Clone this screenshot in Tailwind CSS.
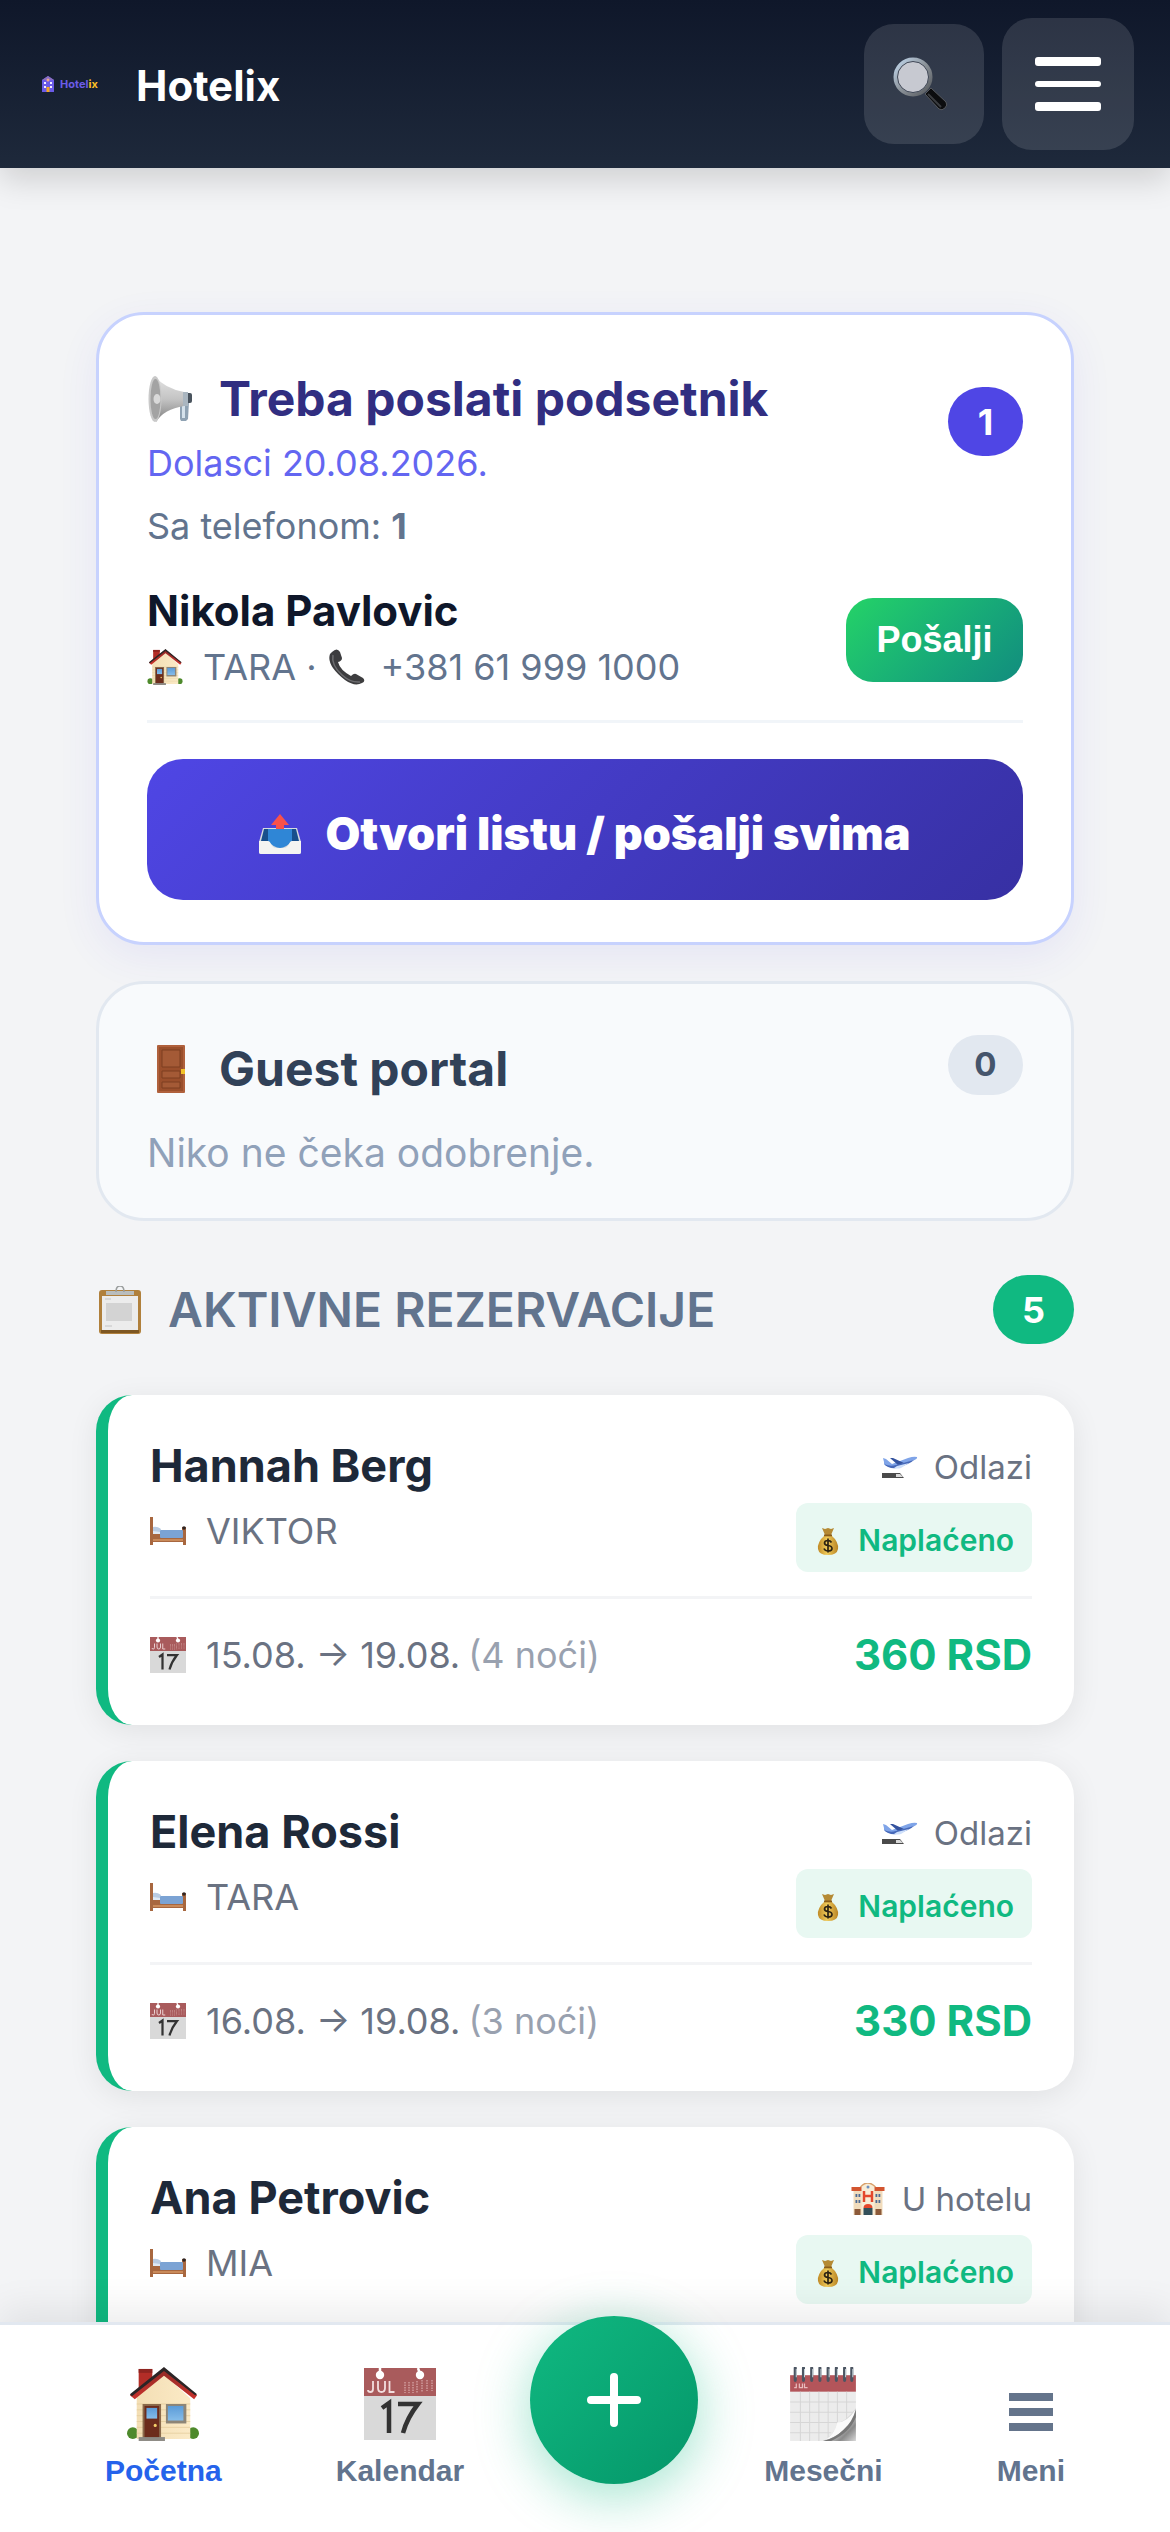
<!DOCTYPE html>
<html lang="sr">
<head>
<meta charset="utf-8">
<meta name="viewport" content="width=device-width, initial-scale=1">
<title>Hotelix</title>
<script src="https://cdn.jsdelivr.net/npm/@tailwindcss/browser@4"></script>
</head>
<body class="flex h-screen flex-col overflow-hidden bg-gray-100 font-['Inter',sans-serif] text-[36px] text-slate-500">

<!-- Shared icon shapes -->
<svg width="0" height="0" class="absolute" aria-hidden="true">
  <defs>
    <linearGradient id="g-roof" x1="0" y1="0" x2="0" y2="1"><stop offset="0" stop-color="#8f2a26"/><stop offset="1" stop-color="#c8322c"/></linearGradient>
    <linearGradient id="g-win" x1="0" y1="0" x2="0" y2="1"><stop offset="0" stop-color="#5b9bd8"/><stop offset="1" stop-color="#86bdea"/></linearGradient>
    <linearGradient id="g-wall" x1="0" y1="0" x2="1" y2="0"><stop offset="0" stop-color="#f3deb4"/><stop offset="1" stop-color="#fbeac6"/></linearGradient>
    <linearGradient id="g-horn" x1="0" y1="0" x2="0" y2="1"><stop offset="0" stop-color="#e4e4e4"/><stop offset=".5" stop-color="#c4c4c4"/><stop offset="1" stop-color="#7f7f7f"/></linearGradient>
    <linearGradient id="g-rim" x1="0" y1="0" x2="1" y2="1"><stop offset="0" stop-color="#c2d8ee"/><stop offset=".5" stop-color="#8b9299"/><stop offset="1" stop-color="#55585c"/></linearGradient>
    <linearGradient id="g-bag" x1="0" y1="0" x2="1" y2="0"><stop offset="0" stop-color="#c08a26"/><stop offset=".45" stop-color="#f0cb5a"/><stop offset="1" stop-color="#b98425"/></linearGradient>
    <linearGradient id="g-curl" x1="0" y1="0" x2="1" y2="1"><stop offset="0" stop-color="#ffffff"/><stop offset=".45" stop-color="#ededed"/><stop offset=".75" stop-color="#8a8a8a"/><stop offset="1" stop-color="#d8d8d8"/></linearGradient>
  </defs>
  <symbol id="house" viewBox="0 0 74 76">
    <circle cx="6" cy="68" r="6" fill="#4e8a2c"/><circle cx="68" cy="68" r="6" fill="#4e8a2c"/>
    <rect x="12" y="2" width="14" height="26" fill="#b32d27"/><rect x="12" y="2" width="14" height="4" fill="#8f2420"/>
    <path d="M10 30 38 8l27 24v42H10z" fill="url(#g-wall)"/>
    <path d="M10 38h55M10 44h55M10 50h55M10 56h55M10 62h55M10 68h55" stroke="#e3cc9c" stroke-width=".8"/>
    <path d="M3 29 38 1l34 28-3 4L38 9 8 33z" fill="url(#g-roof)"/>
    <path d="M3 28 38 0l34 28-2 1L38 4 5 30z" fill="#2b2526"/>
    <rect x="16" y="38" width="19" height="35" fill="#8a6a4c"/><rect x="18" y="40" width="15" height="33" fill="#6c2c1c"/>
    <rect x="20" y="42" width="11" height="11" fill="url(#g-win)"/><circle cx="29" cy="60" r="1.6" fill="#f4cf6a"/>
    <rect x="40" y="38" width="21" height="20" fill="#8d8577"/><rect x="42" y="40" width="16" height="15" fill="url(#g-win)"/>
    <rect x="12" y="72" width="27" height="4" fill="#8d8a84"/>
  </symbol>
  <symbol id="calendar" viewBox="0 0 72 72">
    <rect width="72" height="72" fill="#d9d9d9"/><rect width="72" height="28" fill="#a95b5c"/>
    <circle cx="16" cy="7" r="4.200" fill="#fff"/><circle cx="56" cy="7" r="4.200" fill="#fff"/>
    <path d="M16 0v6M54 0l2 6" stroke="#fff" stroke-width="2.500"/>
    <path d="M9 13v8q0 3-2.500 3T4 22M14 13v7q0 4 3.500 4t3.500-4v-7M25.500 13v11h5" fill="none" stroke="#f2dede" stroke-width="1.800"/>
    <path d="M41 14v11M45 14v11M49 14v11M53 13v12M58 12v12M63 12v11M68 12v11" stroke="#cf9b9b" stroke-width="1.500" stroke-dasharray="1.500 1"/>
    <path d="m18 40 7-5v30M34 36h20Q43 50 39 65" fill="none" stroke="#333" stroke-width="4.500"/>
  </symbol>
  <symbol id="spiral" viewBox="0 0 64 72">
    <rect y="8" width="64" height="64" fill="#ececec"/><rect x="0" y="8" width="64" height="16" fill="#b3555a"/>
    <path d="M10 24v48M19 24v48M28 24v48M37 24v48M46 24v48M55 24v30M0 34h64M0 44h62M0 54h54M0 64h40" stroke="#d6d6d6" stroke-width="1"/>
    <path d="M6 16v4h-2M9 16v4h3v-4M14 16v4h3" fill="none" stroke="#e8bcbc" stroke-width="1.200"/>
    <path d="M32 72q10-4 14-18 8 0 18-14v32z" fill="url(#g-curl)"/><path d="M34 71q9-5 12-17 9 0 18-13-3 12-12 20-8 8-18 10z" fill="#fafafa"/>
    <path d="M52 61q9-8 12-20v8Q58 64 40 72h-8q12-3 20-11z" fill="#777"/>
    <path d="M5 1v12M13 1v12M21 1v12M29 1v12M37 1v12M45 1v12M53 1v12M60 1v12" stroke="#4c5562" stroke-width="3" stroke-linecap="round"/>
    <path d="M6 2v8M14 2v8M22 2v8M30 2v8M38 2v8M46 2v8M54 2v8M61 2v8" stroke="#c6d2d8" stroke-width="1"/>
  </symbol>
  <symbol id="bed" viewBox="0 0 36 28">
    <path d="M0 0h3v14h29V10h4v18h-3v-3H3v3H0z" fill="#a8673f"/>
    <path d="M3 11h7v6H3z" fill="#dfe9f4"/><path d="M3 10q4-1 8 2l-1 3-7-1z" fill="#b9cbe2"/><rect x="10" y="13" width="23" height="8" rx="1" fill="#7ba3d4"/>
    <path d="M3 22h30v2H3z" fill="#c98a5a"/><circle cx="34" cy="11" r="1.800" fill="#2f2523"/>
  </symbol>
  <symbol id="plane" viewBox="0 0 36 24">
    <path d="M2 7 1 3l3 1 6 5 16-6q6-2 9-1 1 2-5 4L14 12q-8 1-12-3z" fill="#7fa4e8"/>
    <path d="m8 3 3 0 11 5-6 2z" fill="#33529e"/><path d="M2 9q6 3 12 1l18-5q-4 4-17 8-9 1-13-4z" fill="#4668b8"/><path d="m15 11 12-3-8 5q-4 1-7 0z" fill="#cfe0fa"/>
    <path d="M0 18h18l4 5H0z" fill="#4a4a4a"/><path d="M14 19h4l3 3h-7z" fill="#d9d9d9"/>
  </symbol>
  <symbol id="hotel" viewBox="0 0 33 32">
    <path d="M2 7h29v25H2z" fill="#f1dcbc"/><path d="M10 3q6-5 13 0v29H10z" fill="#f8ecd6"/>
    <path d="M0 4h10v4H0zM23 4h10v4H23z" fill="#d3552f"/><path d="M9 4q7-8 15 0" fill="none" stroke="#d8a06a" stroke-width="1.500"/><circle cx="16.500" cy="4" r="1.500" fill="#6b8fc0"/>
    <path d="M12.500 8v11M20.500 8v11M12.500 13h8" stroke="#e4472c" stroke-width="2.500"/>
    <path d="M4 11h1.800v3H4zM7 11h1.800v3H7zM4 17h1.800v3H4zM7 17h1.800v3H7zM24 11h1.800v3H24zM27 11h1.800v3H27zM24 17h1.800v3H24zM27 17h1.800v3H27z" fill="#4d6a94"/>
    <path d="M12 25q0-4 4.500-4t4.500 4z" fill="#e4472c"/><rect x="12" y="25" width="9" height="7" fill="#33505a"/><path d="M3 26h6v6H3zM24 26h6v6h-6z" fill="#8c5a3a"/>
  </symbol>
  <symbol id="moneybag" viewBox="0 0 22 28">
    <path d="m5 1 3 1 3-1 3 1 3-1-3 7H8z" fill="#b58a34"/><path d="M8 8h6q8 7 7 14-1 6-10 6T1 22Q0 15 8 8z" fill="url(#g-bag)"/>
    <path d="M7 7.500h8v1.800H7z" fill="#8a5e1a"/>
    <path d="M14.500 15.500q-1-2-3.500-2-3.500 0-3.500 2.500 0 2 3.500 2.500 4 .5 4 3 0 2.500-4 2.500-3 0-4-2.500M11 11.500v14" fill="none" stroke="#2e2412" stroke-width="1.700"/>
  </symbol>
  <symbol id="megaphone" viewBox="0 0 46 46">
    <path d="M32 22h9v4l-1 17-2 2h-5l-1-2z" fill="#8fa2b3"/><path d="M34 22h3v20h-3z" fill="#d5e2ec"/><rect x="37" y="17" width="7" height="10" rx="2" fill="#4a545e"/>
    <path d="M7 0q9 12 29 16 3 6 0 14-20 3-28 16z" fill="url(#g-horn)"/><path d="M35 16h5v14h-5z" fill="#aab6c0"/>
    <ellipse cx="7" cy="23" rx="6.500" ry="23" fill="#c9c9c9"/><ellipse cx="7.500" cy="23" rx="5" ry="20" fill="#a3a3a3"/><ellipse cx="9" cy="23" rx="3.500" ry="5" fill="#d9d9d9"/>
  </symbol>
  <symbol id="phone" viewBox="0 0 36 36">
    <path d="M3 3Q8-2 11 3l2 6q0 3-4 4 2 8 13 14 3-3 5-2l7 4q3 3-1 5-7 4-17-3Q-3 16 1 5z" fill="#3d3d3f"/>
    <path d="M4 6Q2 16 13 26q9 8 18 7" fill="none" stroke="#6d6d70" stroke-width="1.500"/>
  </symbol>
  <symbol id="outbox" viewBox="0 0 42 40">
    <path d="M4 14h34l4 14v10q0 2-2 2H2q-2 0-2-2V28z" fill="#d7dbe0"/><path d="M5 15h32l3 12H2z" fill="#174f8d"/><path d="M9 15h24v12q-6 7-12 7T9 27z" fill="#2f86d6"/>
    <path d="M0 27h9q2 0 3 3 2 4 5 4h8q3 0 5-4 1-3 3-3h9v11q0 2-2 2H2q-2 0-2-2z" fill="#f4f4f2"/>
    <path d="m21 0 9 11h-5v4h-8v-4h-5z" fill="#f8514b"/>
  </symbol>
  <symbol id="door" viewBox="0 0 28 48">
    <rect width="28" height="48" rx="1" fill="#b0603c"/><rect x="2" y="2" width="24" height="44" fill="#9a4f2c"/>
    <path d="M5 5h18v17H5zM5 26h18v7H5zM5 37h18v6H5z" fill="#a45a36" stroke="#7d3f20" stroke-width="1"/><path d="M24 24h4v5h-4z" fill="#f2c229"/>
  </symbol>
  <symbol id="clipboard" viewBox="0 0 42 48">
    <rect y="4" width="42" height="44" rx="3" fill="#b0803c"/><path d="M3 10h36v34H3z" fill="#ececec"/><path d="M2 44h38v3H2z" fill="#7e5722"/>
    <path d="M7 17h26v18H7z" fill="#d3d3d3"/><path d="M6 13h6M6 40h7" stroke="#c4c4c4" stroke-width="1"/>
    <path d="M7 5h28v4H7z" fill="#b9bdbd"/><path d="M17 6q0-6 4-6t4 6" fill="none" stroke="#9a9e9e" stroke-width="1.500"/>
  </symbol>
</svg>

<header class="relative z-20 flex shrink-0 items-center justify-between bg-linear-to-b from-[#0f172a] to-[#1e293b] px-9 py-[18px] shadow-[0_12px_30px_rgba(0,0,0,0.15)]">
  <a href="#" class="flex items-center gap-9">
    <span class="flex w-16 items-center gap-1 pl-1">
      <svg class="size-4 shrink-0" viewBox="0 0 14 16" aria-hidden="true">
        <path d="M7 0 13 4v12H1V4z" fill="#6a5be8"/><path d="M7 0 13 4H1z" fill="#8a6fc0"/><circle cx="7" cy="4" r="1.500" fill="#f0a58a"/>
        <path d="M3 6h2v2H3zM9 6h2v2H9zM3 10h2v2H3zM9 10h2v2H9z" fill="#f3efff"/><path d="M5.500 11h3v5h-3z" fill="#f5a623"/>
      </svg>
      <span class="text-[11px] leading-4 font-bold text-[#6c5ce7]">Hotel<span class="text-[#fbbf24]">ix</span></span>
    </span>
    <span class="pt-1 text-[42px] leading-14 font-bold text-white">Hotelix</span>
  </a>
  <div class="flex items-center gap-[18px]">
    <button type="button" aria-label="Pretraga" class="flex size-30 items-center justify-center rounded-[30px] bg-white/12">
      <svg class="mr-2 size-14" viewBox="0 0 56 56" aria-hidden="true">
        <path d="m33 38 6-6 15 14q2 3-1 6t-6 1z" fill="#0c0d0f" stroke="#56595e" stroke-width="1"/><path d="m36 38 13 13" stroke="#3b3d40" stroke-width="2"/>
        <circle cx="21" cy="21" r="17.500" fill="#c7c9d1" stroke="url(#g-rim)" stroke-width="4"/><circle cx="21" cy="21" r="15.500" fill="none" stroke="#3f4756" stroke-width="1"/>
      </svg>
    </button>
    <button type="button" aria-label="Otvori meni" class="flex size-33 flex-col items-center justify-center gap-[15px] rounded-[30px] bg-white/12">
      <span class="h-[9px] w-[66px] rounded-[3px] bg-white"></span>
      <span class="h-[6px] w-[66px] rounded-[3px] bg-white"></span>
      <span class="h-[9px] w-[66px] rounded-[3px] bg-white"></span>
    </button>
  </div>
</header>

<main class="min-h-0 flex-1 overflow-y-auto px-24 pt-36 [scrollbar-width:none]">
  <section class="rounded-[48px] border-3 border-[#c7d2fe] bg-white px-12 py-[42px] shadow-[0_12px_42px_rgba(79,70,229,0.08)]">
    <div class="flex items-center justify-between">
      <div>
        <h2 class="flex items-center gap-6 text-[48px] leading-[84px] font-bold text-[#312e81]">
          <svg class="h-[46px] w-12" aria-hidden="true"><use href="#megaphone"/></svg>Treba poslati podsetnik
        </h2>
        <p class="leading-[45px] text-[#6366f1]">Dolasci 20.08.2026.</p>
      </div>
      <span class="flex h-[69px] w-[75px] items-center justify-center rounded-full bg-[#4f46e5] font-bold text-white">1</span>
    </div>
    <p class="mt-4 leading-12">Sa telefonom: <strong class="font-bold">1</strong></p>
    <div class="mt-[34px] flex items-center justify-between border-b-3 border-slate-100 pb-6">
      <div>
        <h3 class="text-[42px] leading-[54px] font-bold text-[#0f172a]">Nikola Pavlovic</h3>
        <p class="flex items-center leading-[58px]">
          <svg class="mr-5 size-9" aria-hidden="true"><use href="#house"/></svg>TARA&nbsp;·
          <svg class="mr-4 ml-3 size-9" aria-hidden="true"><use href="#phone"/></svg>+381 61 999 1000
        </p>
      </div>
      <button type="button" class="h-21 w-[177px] rounded-[27px] bg-linear-135 from-[#25d366] to-[#128c7e] font-['Liberation_Sans',sans-serif] font-bold text-white">Pošalji</button>
    </div>
    <button type="button" class="mt-9 flex h-[141px] w-full items-center justify-center gap-6 rounded-[36px] bg-linear-135 from-[#4f46e5] to-[#3730a3] pt-2 text-[45px] font-black text-white">
      <svg class="h-10 w-[42px]" aria-hidden="true"><use href="#outbox"/></svg>Otvori listu / pošalji svima
    </button>
  </section>

  <section class="mt-9 rounded-[48px] border-3 border-slate-200 bg-slate-50 px-12 py-[42px]">
    <div class="flex items-center justify-between">
      <h2 class="flex items-center gap-6 pt-2 text-[48px] leading-[70px] font-bold text-slate-700">
        <svg class="size-12" aria-hidden="true"><use href="#door"/></svg>Guest portal
      </h2>
      <span class="flex h-15 w-[75px] items-center justify-center rounded-full bg-slate-200 text-[33px] font-bold text-slate-600">0</span>
    </div>
    <p class="mt-[26px] text-[39px] leading-[46px] text-slate-400">Niko ne čeka odobrenje.</p>
  </section>

  <div class="mt-[54px] mb-[51px] flex items-center justify-between">
    <h2 class="flex items-center gap-6 text-[48px] leading-[69px] font-semibold">
      <svg class="size-12" aria-hidden="true"><use href="#clipboard"/></svg>AKTIVNE REZERVACIJE
    </h2>
    <span class="flex h-[69px] w-[81px] items-center justify-center rounded-full bg-[#10b981] font-bold text-white">5</span>
  </div>

  <div class="flex flex-col gap-9">
    <article class="rounded-[36px] border-l-12 border-[#10b981] bg-white p-[42px] text-gray-500 shadow-[0_6px_30px_rgba(0,0,0,0.08)]">
      <div class="flex justify-between border-b-3 border-gray-100 pb-6">
        <div>
          <h3 class="text-[45px] leading-[57px] font-bold text-gray-800">Hannah Berg</h3>
          <p class="mt-3 flex items-center gap-5 leading-[50px]"><svg class="h-7 w-9" aria-hidden="true"><use href="#bed"/></svg>VIKTOR</p>
        </div>
        <div class="flex flex-col items-end gap-[6px]">
          <p class="flex items-center gap-4 text-[33px] leading-15"><svg class="h-6 w-9" aria-hidden="true"><use href="#plane"/></svg>Odlazi</p>
          <p class="flex h-[69px] items-center gap-4 rounded-xl bg-[#e8f8f2] px-[18px] pt-[6px] text-[30px] font-semibold text-[#10b981]"><svg class="size-7" aria-hidden="true"><use href="#moneybag"/></svg>Naplaćeno</p>
        </div>
      </div>
      <div class="flex items-center justify-between pt-7 leading-14">
        <p class="flex items-center"><svg class="mr-5 size-9" aria-hidden="true"><use href="#calendar"/></svg><span>15.08. → 19.08.</span><span class="ml-2 text-gray-400">(4 noći)</span></p>
        <strong class="text-[42px] font-bold text-[#10b981]">360 RSD</strong>
      </div>
    </article>

    <article class="rounded-[36px] border-l-12 border-[#10b981] bg-white p-[42px] text-gray-500 shadow-[0_6px_30px_rgba(0,0,0,0.08)]">
      <div class="flex justify-between border-b-3 border-gray-100 pb-6">
        <div>
          <h3 class="text-[45px] leading-[57px] font-bold text-gray-800">Elena Rossi</h3>
          <p class="mt-3 flex items-center gap-5 leading-[50px]"><svg class="h-7 w-9" aria-hidden="true"><use href="#bed"/></svg>TARA</p>
        </div>
        <div class="flex flex-col items-end gap-[6px]">
          <p class="flex items-center gap-4 text-[33px] leading-15"><svg class="h-6 w-9" aria-hidden="true"><use href="#plane"/></svg>Odlazi</p>
          <p class="flex h-[69px] items-center gap-4 rounded-xl bg-[#e8f8f2] px-[18px] pt-[6px] text-[30px] font-semibold text-[#10b981]"><svg class="size-7" aria-hidden="true"><use href="#moneybag"/></svg>Naplaćeno</p>
        </div>
      </div>
      <div class="flex items-center justify-between pt-7 leading-14">
        <p class="flex items-center"><svg class="mr-5 size-9" aria-hidden="true"><use href="#calendar"/></svg><span>16.08. → 19.08.</span><span class="ml-2 text-gray-400">(3 noći)</span></p>
        <strong class="text-[42px] font-bold text-[#10b981]">330 RSD</strong>
      </div>
    </article>

    <article class="rounded-[36px] border-l-12 border-[#10b981] bg-white p-[42px] pb-36 text-gray-500 shadow-[0_6px_30px_rgba(0,0,0,0.08)]">
      <div class="flex justify-between">
        <div>
          <h3 class="text-[45px] leading-[57px] font-bold text-gray-800">Ana Petrovic</h3>
          <p class="mt-3 flex items-center gap-5 leading-[50px]"><svg class="h-7 w-9" aria-hidden="true"><use href="#bed"/></svg>MIA</p>
        </div>
        <div class="flex flex-col items-end gap-[6px]">
          <p class="flex items-center gap-4 text-[33px] leading-15"><svg class="h-8 w-9" aria-hidden="true"><use href="#hotel"/></svg>U hotelu</p>
          <p class="flex h-[69px] items-center gap-4 rounded-xl bg-[#e8f8f2] px-[18px] pt-[6px] text-[30px] font-semibold text-[#10b981]"><svg class="size-7" aria-hidden="true"><use href="#moneybag"/></svg>Naplaćeno</p>
        </div>
      </div>
    </article>
  </div>
</main>

<nav class="relative z-10 flex h-[210px] shrink-0 items-start justify-around border-t-3 border-slate-200 bg-white px-12 pt-[42px] font-['Liberation_Sans',sans-serif] text-[30px] leading-9 font-bold shadow-[0_-12px_36px_rgba(0,0,0,0.08)]">
  <a href="#" class="flex flex-col items-center gap-3 px-12 text-[#2563eb]"><svg class="h-[74px] w-[72px]" aria-hidden="true"><use href="#house"/></svg>Početna</a>
  <a href="#" class="flex flex-col items-center gap-3 px-12"><svg class="h-[74px] w-[72px]" aria-hidden="true"><use href="#calendar"/></svg>Kalendar</a>
  <button type="button" aria-label="Nova rezervacija" class="-mt-[51px] flex size-42 items-center justify-center rounded-full bg-linear-135 from-[#10b981] to-[#059669] shadow-[0_12px_54px_rgba(16,185,129,0.4)]">
    <svg class="size-14" viewBox="0 0 56 56" aria-hidden="true"><path d="M28 5v46M5 28h46" stroke="#fff" stroke-width="8" stroke-linecap="round"/></svg>
  </button>
  <a href="#" class="flex flex-col items-center gap-3 px-12"><svg class="h-[74px] w-[72px]" aria-hidden="true"><use href="#spiral"/></svg>Mesečni</a>
  <a href="#" class="flex flex-col items-center gap-3 px-12"><svg class="h-[74px] w-[66px]" viewBox="0 0 66 74" aria-hidden="true"><path d="M11 26h44v8H11zM11 41h44v8H11zM11 56h44v8H11z" fill="#64748b"/></svg>Meni</a>
</nav>

</body>
</html>
